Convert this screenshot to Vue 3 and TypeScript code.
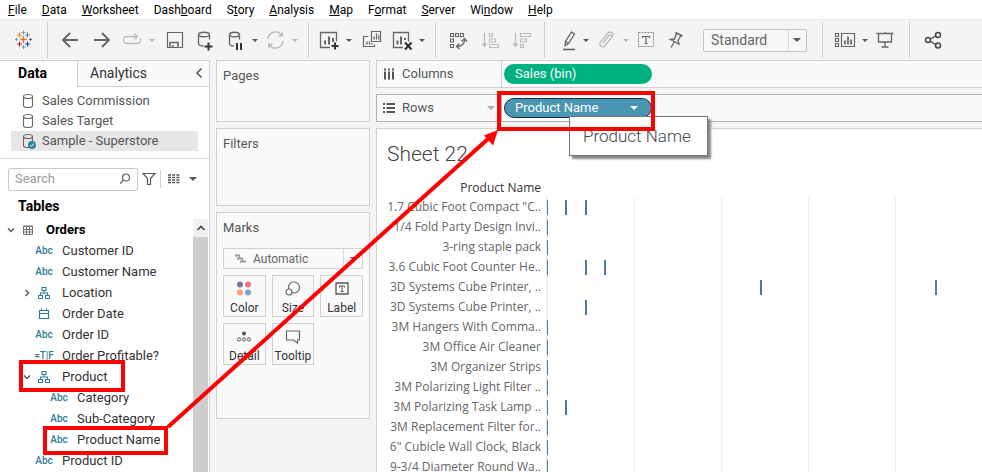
<script setup lang="ts">
import { ref } from 'vue'

interface Shape {
  d: string
  fill?: string
  stroke?: string
  w?: number
  dash?: string
}

interface Tool {
  icon: string
  gap: number
  label?: string
}

interface Field {
  name: string
  kind: 'abc' | 'tf' | 'tree' | 'date' | 'table'
  level: 0 | 1 | 2
  open?: boolean
}

const G = '#666'
const L = '#bbb'
const D = '#333'

const icons: Record<string, Shape[]> = {
  logo: [
    { d: 'M12.5 8v7M9 11.500h7', stroke: '#e8762d', w: 1.4 },
    { d: 'M8.500 4.500v5M6 7h5', stroke: '#eb912c', w: 1.2 },
    { d: 'M16.500 4.500v5M14 7h5', stroke: '#59879b', w: 1.2 },
    { d: 'M8.500 13.500v5M6 16h5', stroke: '#c72037', w: 1.2 },
    { d: 'M16.500 13.500v5M14 16h5', stroke: '#1f457e', w: 1.2 },
    { d: 'M12.500 2.500v4M10.500 4.500h4M12.500 17v4M10.500 19h4M5.500 10v3M4 11.500h3', stroke: '#7199a6', w: 1 },
    { d: 'M19.500 10v3M18 11.500h3', stroke: '#5b6591', w: 1 },
  ],
  back: [{ d: 'M20 12H5M12 5l-7 7l7 7', stroke: G, w: 2 }],
  forward: [{ d: 'M4 12h15M12 5l7 7l-7 7', stroke: G, w: 2 }],
  redo: [{ d: 'M8 8.500H7a3.500 3.500 0 0 0 0 7h10a3.500 3.500 0 0 0 3.200-5M8 8.500h9M14 5.500l3.500 3l-3.500 3', stroke: L, w: 1.3 }],
  save: [
    { d: 'M4.500 4.500h15v15h-15z', stroke: G, w: 1.2 },
    { d: 'M7 19.500v-5h8v5M10 17v2.500', stroke: G, w: 1.6 },
  ],
  dbAdd: [
    { d: 'M5.500 6.500c0-3 11-3 11 0c0 3-11 3-11 0v9c0 1.500 2 2.500 5 2.500M16.500 6.500v5', stroke: G, w: 1.3 },
    { d: 'M15.500 14.500v8M11.500 18.500h8', stroke: D, w: 2 },
  ],
  dbPause: [
    { d: 'M6.500 6.500c0-3 10-3 10 0c0 3-10 3-10 0v9c0 1.500 2 2.500 4.500 2.500M16.500 6.500v5', stroke: G, w: 1.3 },
    { d: 'M14 15v7M18 15v7', stroke: D, w: 2 },
  ],
  refresh: [
    { d: 'M5 11a7.500 7.500 0 0 1 13.500-4M20 13a7.500 7.500 0 0 1-13.500 4', stroke: L, w: 1.4 },
    { d: 'M20 3.500v5h-5zM5 20.500v-5h5z', fill: L },
  ],
  newSheet: [
    { d: 'M13 19.500H3.500v-15h16v9', stroke: G, w: 1.3 },
    { d: 'M8 16.500v-4M12 16.500v-8M16 14v-4', stroke: G, w: 2 },
    { d: 'M18 14.500v7M14.500 18h7', stroke: D, w: 2 },
  ],
  duplicate: [
    { d: 'M11.500 3.500h9v10h-9zM8.500 8.500h-5v10h11v-2', stroke: G, w: 1.2 },
    { d: 'M14 11.500v-3M16.500 11.500v-6M18.800 11.500v-4M7 16.500v-3M9.500 16.500v-3M12 16.500v-1.500', stroke: G, w: 1.3 },
  ],
  clear: [
    { d: 'M13 19.500H3.500v-15h15v9', stroke: G, w: 1.3 },
    { d: 'M7.500 16.500v-4M11 16.500v-8M15 12v-2', stroke: G, w: 2 },
    { d: 'M15 14.500l6.500 7M21.500 14.500l-6.500 7', stroke: D, w: 2.2 },
  ],
  swap: [
    { d: 'M4.500 5.500h3v3h-3zM9.500 5.500h3v3h-3zM14.500 5.500h3v3h-3zM4.500 11h3v3h-3zM4.500 16.500h3v3h-3z', stroke: G, w: 1.1 },
    { d: 'M18.500 12c0 4-2.500 6-7 6.500M15.500 13.500l3-3l2.500 3M13.500 15.500l-3 3l3 2.500', stroke: G, w: 1.3 },
  ],
  sortAsc: [
    { d: 'M6.500 5v13', stroke: L, w: 1.3 },
    { d: 'M3.500 15.500h6l-3 4z', fill: L },
    { d: 'M11.500 5.500h3v3h-3zM11.500 11h6v3h-6zM11.500 16.500h9v3h-9z', stroke: L, w: 1.2 },
  ],
  sortDesc: [
    { d: 'M5.500 5v13', stroke: L, w: 1.3 },
    { d: 'M2.500 15.500h6l-3 4z', fill: L },
    { d: 'M10.500 5.500h10v3h-10zM10.500 11h6v3h-6zM10.500 16.500h3v3h-3z', stroke: L, w: 1.2 },
  ],
  pen: [
    { d: 'M14.500 4l3 2l-6 9.500l-3.500 2l.5-4zM8.500 13.500l3 2', stroke: G, w: 1.3 },
    { d: 'M6 21.500h12', stroke: G, w: 1.6 },
  ],
  clip: [{ d: 'M9 15l6-7.500a1.700 1.700 0 0 1 2.700 2L11 17.500a2.800 2.800 0 0 1-4.500-3.500l7-8.500a3 3 0 0 1 5 3.500', stroke: L, w: 1.3 }],
  text: [
    { d: 'M4.500 4.500h15v14h-15z', stroke: '#888', w: 1, dash: '2 1' },
    { d: 'M8.500 10v-1.500h7v1.500M12 8.500v7M10.500 15.500h3', stroke: G, w: 1.2 },
  ],
  pin: [{ d: 'M11.500 4.500l7 3.500M12.500 5l-2 6l-4 .5l8.500 4.500l-1-3.500l3-5M10 14.500l-3 5', stroke: G, w: 1.4 }],
  showMe: [
    { d: 'M2.500 5.500h3v3h-3zM2.500 10.500h3v3h-3zM2.500 15.500h3v3h-3zM8.500 5.500h13v13h-13z', stroke: G, w: 1.2 },
    { d: 'M12 16.500v-4M15 16.500v-8M18 16.500v-5', stroke: G, w: 1.8 },
  ],
  present: [{ d: 'M3.500 5.500h17M5.500 5.500v8.500h13v-8.500M12 4v1M12 14v5M8.500 19h7', stroke: G, w: 1.3 }],
  share: [
    { d: 'M8.500 11l6-3.500M8.500 13.500l6 3.500', stroke: '#444', w: 1.4 },
    { d: 'M8.500 12a2.500 2.500 0 1 1-5 0a2.500 2.500 0 0 1 5 0M18.500 7a2.500 2.500 0 1 1-5 0a2.500 2.500 0 0 1 5 0M18.500 17.500a2.500 2.500 0 1 1-5 0a2.500 2.500 0 0 1 5 0', stroke: '#444', w: 1.4 },
  ],
}

const menu: [string, string, string][] = [
  ['', 'F', 'ile'],
  ['', 'D', 'ata'],
  ['', 'W', 'orksheet'],
  ['Dash', 'b', 'oard'],
  ['S', 't', 'ory'],
  ['', 'A', 'nalysis'],
  ['', 'M', 'ap'],
  ['F', 'o', 'rmat'],
  ['', 'S', 'erver'],
  ['Wi', 'n', 'dow'],
  ['', 'H', 'elp'],
]

const toolsLeft: Tool[] = [
  { icon: 'logo', gap: 0, label: 'Start page' },
  { icon: 'sep', gap: 12 },
  { icon: 'back', gap: 10, label: 'Undo' },
  { icon: 'forward', gap: 8, label: 'Redo' },
  { icon: 'redo', gap: 6, label: 'Replay' },
  { icon: 'caret-off', gap: 3, label: 'Replay options' },
  { icon: 'save', gap: 6, label: 'Save' },
  { icon: 'dbAdd', gap: 6, label: 'New data source' },
  { icon: 'dbPause', gap: 6, label: 'Pause updates' },
  { icon: 'caret', gap: 3, label: 'Update options' },
  { icon: 'refresh', gap: 3, label: 'Run update' },
  { icon: 'caret-off', gap: 3, label: 'Run options' },
  { icon: 'sep', gap: 8 },
  { icon: 'newSheet', gap: 8, label: 'New worksheet' },
  { icon: 'caret', gap: 3, label: 'New sheet options' },
  { icon: 'duplicate', gap: 6, label: 'Duplicate' },
  { icon: 'clear', gap: 6, label: 'Clear sheet' },
  { icon: 'caret', gap: 3, label: 'Clear options' },
  { icon: 'sep', gap: 8 },
  { icon: 'swap', gap: 10, label: 'Swap rows and columns' },
  { icon: 'sortAsc', gap: 8, label: 'Sort ascending' },
  { icon: 'sortDesc', gap: 8, label: 'Sort descending' },
  { icon: 'sep', gap: 10 },
  { icon: 'pen', gap: 12, label: 'Highlight' },
  { icon: 'caret', gap: 0, label: 'Highlight options' },
  { icon: 'clip', gap: 3, label: 'Group' },
  { icon: 'caret-off', gap: 3, label: 'Group options' },
  { icon: 'text', gap: 3, label: 'Show mark labels' },
  { icon: 'pin', gap: 6, label: 'Fix axes' },
]

const toolsRight: Tool[] = [
  { icon: 'sep', gap: 15 },
  { icon: 'showMe', gap: 10, label: 'Show cards' },
  { icon: 'caret', gap: 3, label: 'Card options' },
  { icon: 'present', gap: 3, label: 'Presentation mode' },
  { icon: 'sep', gap: 12 },
  { icon: 'share', gap: 12, label: 'Share' },
]

const sources = ['Sales Commission', 'Sales Target', 'Sample - Superstore']
const activeSource = ref('Sample - Superstore')
const search = ref('')
const fit = ref('Standard')
const markType = ref('Automatic')

const fields: Field[] = [
  { name: 'Orders', kind: 'table', level: 0, open: true },
  { name: 'Customer ID', kind: 'abc', level: 1 },
  { name: 'Customer Name', kind: 'abc', level: 1 },
  { name: 'Location', kind: 'tree', level: 1, open: false },
  { name: 'Order Date', kind: 'date', level: 1 },
  { name: 'Order ID', kind: 'abc', level: 1 },
  { name: 'Order Profitable?', kind: 'tf', level: 1 },
  { name: 'Product', kind: 'tree', level: 1, open: true },
  { name: 'Category', kind: 'abc', level: 2 },
  { name: 'Sub-Category', kind: 'abc', level: 2 },
  { name: 'Product Name', kind: 'abc', level: 2 },
  { name: 'Product ID', kind: 'abc', level: 1 },
]

const binWidth = 19.45
const products: { name: string; bins: number[] }[] = [
  { name: '1.7 Cubic Foot Compact "C..', bins: [0, 1, 2] },
  { name: '1/4 Fold Party Design Invi..', bins: [0] },
  { name: '3-ring staple pack', bins: [0] },
  { name: '3.6 Cubic Foot Counter He..', bins: [0, 2, 3] },
  { name: '3D Systems Cube Printer, ..', bins: [11, 20] },
  { name: '3D Systems Cube Printer, ..', bins: [2] },
  { name: '3M Hangers With Comma..', bins: [0] },
  { name: '3M Office Air Cleaner', bins: [0] },
  { name: '3M Organizer Strips', bins: [0] },
  { name: '3M Polarizing Light Filter ..', bins: [0] },
  { name: '3M Polarizing Task Lamp ..', bins: [0, 1] },
  { name: '3M Replacement Filter for..', bins: [0] },
  { name: '6" Cubicle Wall Clock, Black', bins: [0] },
  { name: '9-3/4 Diameter Round Wa..', bins: [0] },
]

const markLeft = (bin: number) => `${Math.round(bin * binWidth)}px`
</script>

<template>
  <div class="app">
    <nav class="menu" aria-label="Main menu">
      <a v-for="m in menu" :key="m.join('')" href="#">{{ m[0] }}<u>{{ m[1] }}</u>{{ m[2] }}</a>
    </nav>

    <div class="toolbar">
      <template v-for="(t, i) in toolsLeft" :key="i">
        <span v-if="t.icon === 'sep'" class="sep" :class="'gap-' + t.gap"></span>
        <button v-else-if="t.icon.startsWith('caret')" class="caret-btn" :class="['gap-' + t.gap, { off: t.icon === 'caret-off' }]" :aria-label="t.label">
          <i class="caret"></i>
        </button>
        <button v-else class="tool" :class="'gap-' + t.gap" :aria-label="t.label">
          <svg width="24" height="24" viewBox="0 0 24 24">
            <path v-for="(s, k) in icons[t.icon]" :key="k" :d="s.d" :fill="s.fill ?? 'none'" :stroke="s.stroke ?? 'none'" :stroke-width="s.w" :stroke-dasharray="s.dash" />
          </svg>
        </button>
      </template>
      <div class="fit gap-15">
        <select v-model="fit" aria-label="Fit">
          <option>Standard</option>
          <option>Fit Width</option>
          <option>Fit Height</option>
          <option>Entire View</option>
        </select>
        <i class="caret"></i>
      </div>
      <template v-for="(t, i) in toolsRight" :key="i">
        <span v-if="t.icon === 'sep'" class="sep" :class="'gap-' + t.gap"></span>
        <button v-else-if="t.icon === 'caret'" class="caret-btn" :class="'gap-' + t.gap" :aria-label="t.label">
          <i class="caret"></i>
        </button>
        <button v-else class="tool" :class="'gap-' + t.gap" :aria-label="t.label">
          <svg width="24" height="24" viewBox="0 0 24 24">
            <path v-for="(s, k) in icons[t.icon]" :key="k" :d="s.d" :fill="s.fill ?? 'none'" :stroke="s.stroke ?? 'none'" :stroke-width="s.w" />
          </svg>
        </button>
      </template>
    </div>

    <div class="workspace">
      <aside class="data-pane">
        <div class="tabs">
          <button class="tab active">Data</button>
          <div class="tab-rest">
            <button class="tab">Analytics</button>
            <button class="collapse" aria-label="Collapse pane">
              <svg width="10" height="12" viewBox="0 0 10 12"><path d="M7.500 1.500L3 6l4.500 4.500" fill="none" stroke="#555" stroke-width="1.500" /></svg>
            </button>
          </div>
        </div>

        <div class="sources">
          <button v-for="s in sources" :key="s" class="source" :class="{ active: s === activeSource }" @click="activeSource = s">
            <svg width="14" height="16" viewBox="0 0 14 16">
              <path d="M1.500 3.500c0-2.700 9-2.700 9 0c0 2.700-9 2.700-9 0v9c0 2.700 9 2.700 9 0v-9" fill="none" stroke="#666" stroke-width="1.100" />
              <template v-if="s === 'Sample - Superstore'">
                <circle cx="10" cy="12" r="4" fill="#2e7fa3" />
                <path d="M8 12l1.500 1.500l2.500-3" fill="none" stroke="#fff" />
              </template>
            </svg>
            <span>{{ s }}</span>
          </button>
        </div>

        <div class="search-row">
          <div class="search">
            <input v-model="search" type="text" placeholder="Search" aria-label="Search fields" />
            <svg width="12" height="12" viewBox="0 0 12 12"><circle cx="7" cy="4.500" r="3.500" fill="none" stroke="#666" stroke-width="1.200" /><path d="M4.500 7L1 10.500" stroke="#666" stroke-width="1.300" /></svg>
          </div>
          <button class="mini" aria-label="Filter fields">
            <svg width="14" height="14" viewBox="0 0 14 14"><path d="M1 1.500h12l-4.500 5v6h-3v-6z" fill="none" stroke="#555" stroke-width="1.200" /></svg>
          </button>
          <span class="mini-sep"></span>
          <button class="mini" aria-label="View options">
            <svg width="14" height="12" viewBox="0 0 14 12"><path d="M1 2h12M1 4.500h12M1 7h12M1 9.500h12" stroke="#555" stroke-width="1.300" stroke-dasharray="3 1.200" /></svg>
          </button>
          <i class="caret"></i>
        </div>

        <h2>Tables</h2>

        <div class="tree-wrap">
          <ul class="tree">
            <li v-for="f in fields" :key="f.name" :class="'level-' + f.level">
              <span class="chev">
                <svg v-if="f.open !== undefined" width="10" height="10" viewBox="0 0 10 10">
                  <path :d="f.open ? 'M2 3.500l3 3l3-3' : 'M3.500 2l3 3l-3 3'" fill="none" stroke="#555" stroke-width="1.400" />
                </svg>
              </span>
              <span class="kind">
                <template v-if="f.kind === 'abc'">Abc</template>
                <template v-else-if="f.kind === 'tf'">=T|F</template>
                <svg v-else-if="f.kind === 'tree'" width="12" height="12" viewBox="0 0 12 12">
                  <path d="M4 .5h4v3h-4zM.5 8.500h4v3h-4zM7.500 8.500h4v3h-4zM6 3.500v2.500M2.500 8.500v-2.500h7v2.500" fill="none" stroke="#2f7d96" stroke-width="1.100" />
                </svg>
                <svg v-else-if="f.kind === 'date'" width="12" height="12" viewBox="0 0 12 12">
                  <path d="M1.500 2.500h9v8h-9zM1.500 5.500h9M3.500 .5v2M8.500 .5v2" fill="none" stroke="#2f7d96" stroke-width="1.200" />
                </svg>
                <svg v-else width="12" height="12" viewBox="0 0 12 12">
                  <path d="M1.500 2.500h9v8h-9zM1.500 5.500h9M1.500 8h9M4.500 2.500v8M7.500 2.500v8M1 2h10" fill="none" stroke="#777" stroke-width="1" />
                </svg>
              </span>
              <span class="name">{{ f.name }}</span>
            </li>
          </ul>
          <div class="scrollbar">
            <button aria-label="Scroll up">
              <svg width="10" height="8" viewBox="0 0 10 8"><path d="M1.500 6L5 2.500L8.500 6" fill="none" stroke="#444" stroke-width="1.600" /></svg>
            </button>
            <div class="thumb"></div>
          </div>
        </div>
      </aside>

      <section class="cards">
        <div class="card pages"><h3>Pages</h3></div>
        <div class="card filters"><h3>Filters</h3></div>
        <div class="card marks">
          <h3>Marks</h3>
          <div class="mark-type">
            <svg width="12" height="9" viewBox="0 0 12 9"><path d="M1 1.500h5M3 4.500h6M6 7.500h6" stroke="#999" stroke-width="2" /><path d="M5.500 1v4M8.500 4v4" stroke="#999" /></svg>
            <select v-model="markType" aria-label="Mark type">
              <option>Automatic</option>
              <option>Bar</option>
              <option>Line</option>
            </select>
            <i class="caret"></i>
          </div>
          <div class="mark-grid">
            <button>
              <svg width="24" height="20" viewBox="0 0 24 20"><circle cx="8" cy="5.500" r="3" fill="#86709b" /><circle cx="16" cy="5.500" r="3" fill="#f2707f" /><circle cx="8" cy="13.500" r="3" fill="#f3a46b" /><circle cx="16" cy="13.500" r="3" fill="#7ba3cd" /></svg>
              <span>Color</span>
            </button>
            <button>
              <svg width="24" height="20" viewBox="0 0 24 20"><circle cx="13" cy="8.500" r="5.500" fill="none" stroke="#666" stroke-width="1.200" /><circle cx="8" cy="13" r="3" fill="#fafafa" stroke="#666" stroke-width="1.200" /></svg>
              <span>Size</span>
            </button>
            <button>
              <svg width="24" height="20" viewBox="0 0 24 20"><path d="M6 4h12v11h-12z" fill="none" stroke="#555" stroke-width="1.300" /><path d="M9.500 8.500v-1.500h5v1.500M12 7v5.500M10.500 12.500h3" fill="none" stroke="#555" /></svg>
              <span>Label</span>
            </button>
            <button>
              <svg width="24" height="20" viewBox="0 0 24 20"><circle cx="12" cy="6.500" r="2" fill="#555" /><g fill="none" stroke="#555"><circle cx="7" cy="12.500" r="1.600" /><circle cx="12" cy="12.500" r="1.600" /><circle cx="17" cy="12.500" r="1.600" /></g></svg>
              <span>Detail</span>
            </button>
            <button>
              <svg width="24" height="20" viewBox="0 0 24 20"><path d="M5.500 4h13v9h-2v3l-4-3h-7z" fill="none" stroke="#666" stroke-width="1.200" /></svg>
              <span>Tooltip</span>
            </button>
          </div>
        </div>
      </section>

      <main class="view">
        <div class="shelf">
          <div class="shelf-head">
            <svg width="12" height="12" viewBox="0 0 12 12"><path d="M2 3.500v8M6 3.500v8M10 3.500v8M2 .5v2M6 .5v2M10 .5v2" stroke="#555" stroke-width="2" /></svg>
            <span>Columns</span>
          </div>
          <div class="shelf-body"><button class="pill measure">Sales (bin)</button></div>
        </div>
        <div class="shelf focus">
          <div class="shelf-head">
            <svg width="12" height="12" viewBox="0 0 12 12"><path d="M3.500 2h8.500M3.500 6h8.500M3.500 10h8.500M0 2h2M0 6h2M0 10h2" stroke="#555" stroke-width="2" /></svg>
            <span>Rows</span>
            <i class="caret"></i>
          </div>
          <div class="shelf-body">
            <button class="pill dimension">Product Name<i class="caret"></i></button>
            <div class="tip" role="tooltip">Product Name</div>
          </div>
        </div>
        <div class="sheet">
          <h1>Sheet 22</h1>
          <table>
            <thead>
              <tr><th scope="col">Product Name</th><td></td></tr>
            </thead>
            <tbody>
              <tr v-for="(p, i) in products" :key="i">
                <th scope="row">{{ p.name }}</th>
                <td>
                  <div class="plot">
                    <span v-for="b in p.bins" :key="b" class="mark" :class="{ edge: b === 0 }" :style="{ left: markLeft(b) }"></span>
                  </div>
                </td>
              </tr>
            </tbody>
          </table>
        </div>
      </main>
    </div>

    <svg class="callouts" width="700" height="472" viewBox="0 0 700 472" aria-hidden="true">
      <g fill="none" stroke="#f00" stroke-width="4">
        <rect x="21" y="362" width="102" height="28" />
        <rect x="45" y="428" width="121" height="25" />
        <rect x="499" y="93" width="154" height="36" />
        <path d="M168 427L489 138" />
      </g>
      <path d="M498 130L484 135.500L493 145.500z" fill="#f00" />
    </svg>
  </div>
</template>

<style>
body {
  background: #f4f4f4;
}
</style>

<style scoped>
.app {
  position: relative;
  display: flex;
  flex-direction: column;
  height: 100vh;
  overflow: hidden;
  background: #f4f4f4;
  color: #333;
  font-family: Roboto, "Liberation Sans", sans-serif;
  font-size: 13px;
  line-height: 20px;
}
*,
*::before,
*::after {
  box-sizing: border-box;
}
button,
input,
select {
  margin: 0;
  padding: 0;
  border: 0;
  background: none;
  color: inherit;
  font: inherit;
}
h1,
h2,
h3,
ul {
  margin: 0;
  padding: 0;
  font-weight: 400;
}
svg {
  flex: none;
  display: block;
}
.caret {
  flex: none;
  width: 0;
  height: 0;
  border: 4px solid transparent;
  border-top-color: #555;
  border-bottom: 0;
}

.menu {
  display: flex;
  flex: none;
  gap: 15px;
  height: 19px;
  padding-left: 8px;
  background: #fff;
  font-size: 12px;
}
.menu a {
  color: #000;
  text-decoration: none;
}

.toolbar {
  display: flex;
  flex: none;
  align-items: center;
  height: 41px;
  padding-left: 11px;
  border-top: 1px solid #ebebeb;
}
.tool {
  flex: none;
  width: 24px;
  height: 24px;
}
.caret-btn {
  display: flex;
  flex: none;
  align-items: center;
  justify-content: center;
  width: 10px;
  height: 24px;
}
.toolbar .caret-btn .caret {
  border-width: 3px;
  border-bottom: 0;
}
.off .caret {
  border-top-color: #b5b5b5;
}
.sep {
  flex: none;
  width: 1px;
  height: 36px;
  background: #d0d0d0;
}
.gap-3 { margin-left: 3px; }
.gap-6 { margin-left: 6px; }
.gap-8 { margin-left: 8px; }
.gap-10 { margin-left: 10px; }
.gap-12 { margin-left: 12px; }
.gap-15 { margin-left: 15px; }
.fit {
  display: grid;
  flex: none;
  grid-template-columns: 1fr 18px;
  align-items: center;
  width: 104px;
  height: 23px;
  border: 1px solid #c4c4c4;
  border-radius: 2px;
  color: #666;
  background: linear-gradient(#d8d8d8, #d8d8d8) right 17px top / 1px 100% no-repeat #f7f7f7;
}
.fit select {
  grid-area: 1 / 1 / 2 / 3;
  height: 21px;
  padding-left: 7px;
  appearance: none;
  font-size: 14px;
}
.fit .caret {
  grid-area: 1 / 2;
  justify-self: center;
  pointer-events: none;
}

.workspace {
  display: flex;
  flex: 1;
  min-height: 0;
  gap: 6px;
}

.data-pane {
  display: flex;
  flex: none;
  flex-direction: column;
  width: 210px;
  border: solid #d0d0d0;
  border-width: 1px 1px 0 0;
  background: #fff;
}
.tabs {
  display: flex;
  flex: none;
  height: 26px;
}
.tab {
  font-size: 14px;
  line-height: 24px;
}
.tab.active {
  width: 77px;
  padding: 0 12px 2px 0;
  color: #000;
  font-weight: 700;
}
.tab-rest {
  display: flex;
  flex: 1;
  align-items: center;
  justify-content: space-between;
  padding: 0 5px 2px 12px;
  border: solid #d0d0d0;
  border-width: 0 0 1px 1px;
  background: #fafafa;
}
.sources {
  flex: none;
  padding: 4px 11px 7px;
  border-bottom: 1px solid #ddd;
}
.source {
  display: flex;
  align-items: center;
  gap: 6px;
  width: 100%;
  height: 20px;
  padding-left: 11px;
  color: #555;
}
.source.active {
  background: #e6e6e6;
}
.search-row {
  display: flex;
  flex: none;
  align-items: center;
  height: 40px;
  padding-left: 8px;
}
.search {
  display: flex;
  align-items: center;
  width: 130px;
  height: 23px;
  padding: 0 6px;
  border: 1px solid #c8c8c8;
  border-radius: 2px;
}
.search input {
  flex: 1;
  min-width: 0;
  outline: 0;
}
.search input::placeholder {
  color: #999;
}
.mini {
  margin: 0 4px;
}
.mini-sep {
  width: 1px;
  height: 18px;
  margin-right: 2px;
  background: #d0d0d0;
}
.search-row > .caret {
  margin-left: 4px;
}
h2 {
  flex: none;
  height: 20px;
  padding-left: 18px;
  color: #000;
  font-size: 14px;
  font-weight: 700;
  line-height: 15px;
}
.tree-wrap {
  display: flex;
  flex: 1;
  min-height: 0;
  padding-right: 1px;
}
.tree {
  flex: 1;
  min-width: 0;
  overflow: hidden;
  list-style: none;
}
.tree li {
  display: flex;
  align-items: center;
  height: 21px;
}
.level-0 { padding-left: 4px; }
.level-1 { padding-left: 20px; }
.level-2 { padding-left: 35px; }
.chev,
.kind {
  display: flex;
  flex: none;
  align-items: center;
  justify-content: center;
}
.chev {
  width: 14px;
}
.kind {
  width: 20px;
  margin-right: 8px;
  color: #2f7d96;
  font-size: 10px;
  font-weight: 500;
  white-space: nowrap;
}
.level-0 .name {
  color: #000;
  font-weight: 700;
}
.scrollbar {
  flex: none;
  width: 15px;
  display: flex;
  flex-direction: column;
}
.scrollbar button {
  display: flex;
  align-items: center;
  justify-content: center;
  height: 18px;
  background: #f0f0f0;
}
.thumb {
  flex: 1;
  background: #cdcdcd;
}

.cards {
  display: flex;
  flex: none;
  flex-direction: column;
  gap: 6px;
  width: 154px;
}
.card {
  flex: none;
  padding: 5px 6px;
  border: 1px solid #d0d0d0;
  background: #fafafa;
}
.card h3 {
  color: #555;
  font-size: 13px;
}
.pages { min-height: 62px; }
.filters { min-height: 78px; }
.marks { min-height: 207px; }
.mark-type {
  display: grid;
  grid-template-columns: 32px 1fr 18px;
  align-items: center;
  height: 21px;
  margin: 10px 0 6px;
  border: 1px solid #d0d0d0;
  background: linear-gradient(#d8d8d8, #d8d8d8) right 18px top / 1px 100% no-repeat;
  color: #666;
}
.mark-type svg {
  grid-area: 1 / 1;
  justify-self: center;
}
.mark-type select {
  grid-area: 1 / 1 / 2 / 4;
  height: 19px;
  padding-left: 29px;
  appearance: none;
  font-size: 12px;
}
.mark-type .caret {
  grid-area: 1 / 3;
  justify-self: center;
  border-width: 3px;
  border-bottom: 0;
  pointer-events: none;
}
.mark-grid {
  display: grid;
  grid-template-columns: repeat(3, 1fr);
  gap: 6px;
}
.mark-grid button {
  display: flex;
  flex-direction: column;
  align-items: center;
  height: 42px;
  padding-top: 3px;
  border: 1px solid #d0d0d0;
  font-size: 12px;
  line-height: 18px;
}

.view {
  display: flex;
  flex: 1;
  flex-direction: column;
  gap: 6px;
  min-width: 0;
}
.shelf {
  display: flex;
  flex: none;
  height: 28px;
  border: solid #d0d0d0;
  border-width: 1px 0 1px 1px;
  background: #fafafa;
}
.shelf-head {
  display: flex;
  flex: none;
  align-items: center;
  gap: 7px;
  width: 125px;
  padding: 0 6px;
  border-right: 1px solid #d0d0d0;
  color: #555;
}
.shelf-head .caret {
  margin-left: auto;
  border-top-color: #aaa;
}
.focus,
.focus .shelf-head {
  border-color: #b0b0b0;
}
.shelf-body {
  position: relative;
  flex: 1;
  padding: 3px 2px;
}
.pill {
  display: flex;
  align-items: center;
  justify-content: space-between;
  width: 148px;
  height: 20px;
  padding: 0 14px 0 11px;
  border-radius: 10px;
  color: #fff;
}
.measure {
  background: #00b180;
}
.dimension {
  padding: 0 13px 0 10px;
  border: 1px solid #1d2b45;
  background: #4996b2;
}
.pill .caret {
  border-top-color: #fff;
}
.tip {
  position: absolute;
  z-index: 2;
  top: 21px;
  left: 67px;
  padding: 0 16px 0 13px;
  border: 1px solid #767676;
  background: #fff;
  box-shadow: 3px 3px 2px #888;
  color: #444;
  font-size: 17px;
  font-weight: 300;
  line-height: 38px;
  white-space: nowrap;
}
.sheet {
  flex: 1;
  min-height: 0;
  overflow: hidden;
  padding: 13px 0 0 10px;
  border: solid #d0d0d0;
  border-width: 1px 0 0 1px;
  background: #fff;
}
h1 {
  color: #444;
  font-size: 21px;
  font-weight: 300;
  line-height: 24px;
}
table {
  width: 100%;
  margin-top: 12px;
  border-collapse: collapse;
  table-layout: fixed;
  font-family: "Open Sans", "Noto Sans", sans-serif;
  font-size: 12px;
}
th,
td {
  height: 20px;
  padding: 0;
}
th {
  width: 154px;
  color: #666;
  font-weight: 400;
  line-height: 20px;
  text-align: right;
  white-space: nowrap;
}
thead th,
thead td {
  height: 19px;
  color: #333;
  line-height: 19px;
}
.plot {
  position: relative;
  height: 20px;
  margin-left: 5px;
  background: repeating-linear-gradient(90deg, #eee 0 1px, transparent 1px 87px) 1px 0;
}
.mark {
  position: absolute;
  top: 3px;
  width: 2px;
  height: 15px;
  background: #4e79a7;
}
.mark.edge {
  width: 1px;
  margin-left: 1px;
}

.callouts {
  position: absolute;
  z-index: 3;
  top: 0;
  left: 0;
  pointer-events: none;
}
</style>
